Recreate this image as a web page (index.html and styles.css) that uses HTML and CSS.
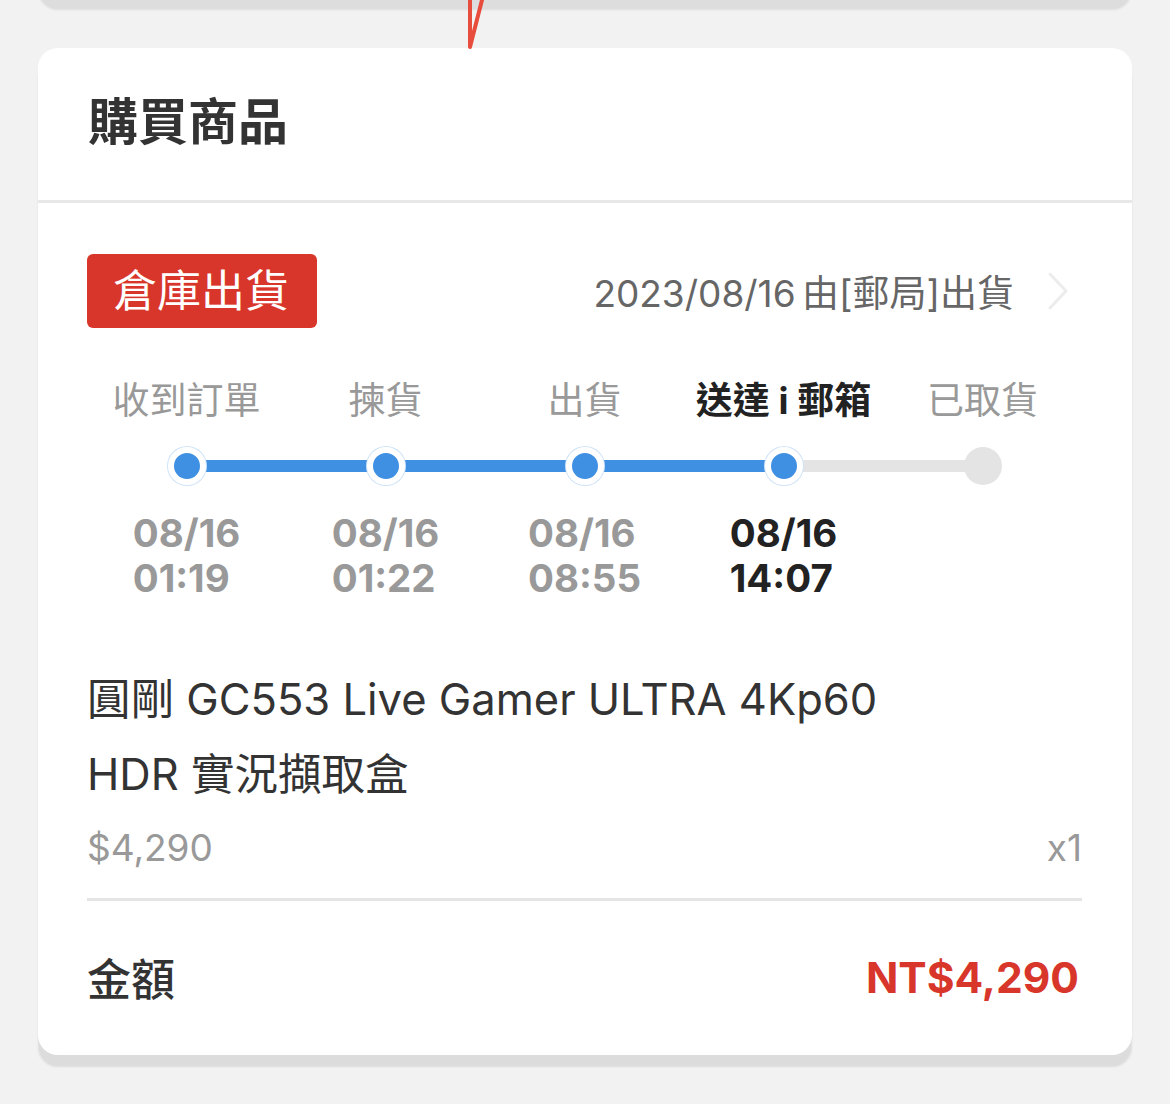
FILE: index.html
```html
<!DOCTYPE html>
<html lang="zh-Hant">
<head>
  <meta charset="UTF-8">
  <meta name="viewport" content="width=device-width, initial-scale=1.0">
  <title>購買商品</title>
  <link rel="stylesheet" href="styles.css">
</head>
<body>

  <div class="page">
    <div class="prev-card"></div>

    <!-- red marker from the section above -->
    <svg class="marker" width="24" height="52" viewBox="0 0 24 52">
      <path d="M8 0 L8 47 L20 0" fill="none" stroke="#e84c3d" stroke-width="4" stroke-linecap="round" stroke-linejoin="round"/>
    </svg>

    <div class="card">
      <div class="card-header">購買商品</div>

      <div class="card-body">
        <div class="ship-row">
          <span class="badge">倉庫出貨</span>
          <span class="ship-info">2023/08/16 由[郵局]出貨</span>
          <svg class="chevron" width="24" height="40" viewBox="0 0 24 40">
            <path d="M4 3 L20 20 L4 37" fill="none" stroke="#ececec" stroke-width="3" stroke-linecap="round" stroke-linejoin="round"/>
          </svg>
        </div>

        <div class="steps">
          <div class="step done">
            <div class="step-label">收到訂單</div>
            <div class="step-track"><span class="dot"></span></div>
            <div class="step-time">08/16<br>01:19</div>
          </div>
          <div class="step done">
            <div class="step-label">揀貨</div>
            <div class="step-track"><span class="dot"></span></div>
            <div class="step-time">08/16<br>01:22</div>
          </div>
          <div class="step done">
            <div class="step-label">出貨</div>
            <div class="step-track"><span class="dot"></span></div>
            <div class="step-time">08/16<br>08:55</div>
          </div>
          <div class="step current">
            <div class="step-label">送達 i 郵箱</div>
            <div class="step-track"><span class="dot"></span></div>
            <div class="step-time">08/16<br>14:07</div>
          </div>
          <div class="step todo">
            <div class="step-label">已取貨</div>
            <div class="step-track"><span class="dot"></span></div>
            <div class="step-time">&nbsp;<br>&nbsp;</div>
          </div>
        </div>

        <div class="product">
          <div class="product-name">圓剛 GC553 Live Gamer ULTRA 4Kp60 HDR 實況擷取盒</div>
          <div class="product-meta">
            <span class="price">$4,290</span>
            <span class="qty">x1</span>
          </div>
        </div>

        <div class="total">
          <span class="total-label">金額</span>
          <span class="total-value">NT$4,290</span>
        </div>
      </div>
    </div>
  </div>

</body>
</html>
```

FILE: styles.css
```css
/* Global styles */
* {
  margin: 0;
  padding: 0;
  box-sizing: border-box;
}

body {
  background: #f2f2f2;
  font-family: Inter, "Noto Sans CJK TC", sans-serif;
  color: #333;
  overflow: hidden;
}

.page {
  position: relative;
  display: flow-root;
  padding: 0 38px 40px;
}

.prev-card {
  height: 40px;
  margin-top: -40px;
  background: #fff;
  border-radius: 0 0 20px 20px;
  box-shadow: 0 10px 2px #dddddd;
}

.marker {
  position: absolute;
  left: 462px;
  top: 0;
}

.card {
  margin-top: 48px;
  background: #fff;
  border-radius: 20px;
  box-shadow: 0 12px 2px #dcdcdc;
}

.card-header {
  height: 155px;
  padding: 0 50px 12px;
  display: flex;
  align-items: center;
  font-size: 50px;
  font-weight: 700;
  color: #333;
  border-bottom: 3px solid #e8e8e8;
}

.card-body {
  padding: 51px 50px 48px 49px;
}

/* Shipping row */
.ship-row {
  display: flex;
  align-items: center;
  height: 74px;
}

.badge {
  height: 74px;
  line-height: 74px;
  padding: 0 28px 0 26px;
  background: #d8362b;
  color: #fff;
  font-size: 44px;
  border-radius: 6px;
}

.ship-info {
  margin-left: auto;
  font-size: 37px;
  color: #666;
  word-spacing: -4px;
}

.chevron {
  margin-left: 32px;
  margin-right: 12px;
}

/* Progress steps */
.steps {
  display: grid;
  grid-template-columns: repeat(5, 1fr);
  margin-top: 48px;
}

.step {
  display: flex;
  flex-direction: column;
  align-items: center;
}

.step-label {
  font-size: 37px;
  line-height: 50px;
  color: #999;
}

.step-track {
  position: relative;
  width: 100%;
  height: 40px;
  margin-top: 20px;
  display: flex;
  justify-content: center;
  align-items: center;
}

.step-track::before {
  content: "";
  position: absolute;
  left: 0;
  right: 0;
  top: 14px;
  height: 12px;
  background: #e4e4e4;
}

.step:first-child .step-track::before {
  left: 50%;
}

.step:last-child .step-track::before {
  right: 50%;
}

.step.done .step-track::before {
  background: #3f8fe3;
}

.step.current .step-track::before {
  background: linear-gradient(to right, #3f8fe3 50%, #e4e4e4 50%);
}

.dot {
  position: relative;
  width: 38px;
  height: 38px;
  border-radius: 50%;
  background: #3f8fe3;
  border: 6px solid #fff;
  box-shadow: 0 0 0 1px #cfe3f8;
}

.step.todo .dot {
  background: #e4e4e4;
  border: none;
  box-shadow: none;
}

.step-time {
  margin-top: 25px;
  font-size: 38.5px;
  line-height: 45px;
  font-weight: 700;
  color: #999;
  text-align: left;
}

.step.current .step-label,
.step.current .step-time {
  color: #222;
  font-weight: 700;
}

/* Product */
.product {
  margin-top: 61px;
  border-bottom: 3px solid #e4e4e4;
  padding-bottom: 22px;
}

.product-name {
  font-size: 43.5px;
  line-height: 75px;
  color: #333;
  max-width: 820px;
}

.product-meta {
  display: flex;
  justify-content: space-between;
  align-items: center;
  margin-top: 8px;
  font-size: 37px;
  line-height: 56px;
  color: #999;
}

/* Total */
.total {
  display: flex;
  justify-content: space-between;
  align-items: center;
  margin-top: 46px;
  height: 60px;
}

.total-label {
  font-size: 44px;
  font-weight: 500;
  color: #333;
}

.total-value {
  font-size: 42.5px;
  font-weight: 700;
  color: #d8362b;
  margin-right: 3px;
}
```
